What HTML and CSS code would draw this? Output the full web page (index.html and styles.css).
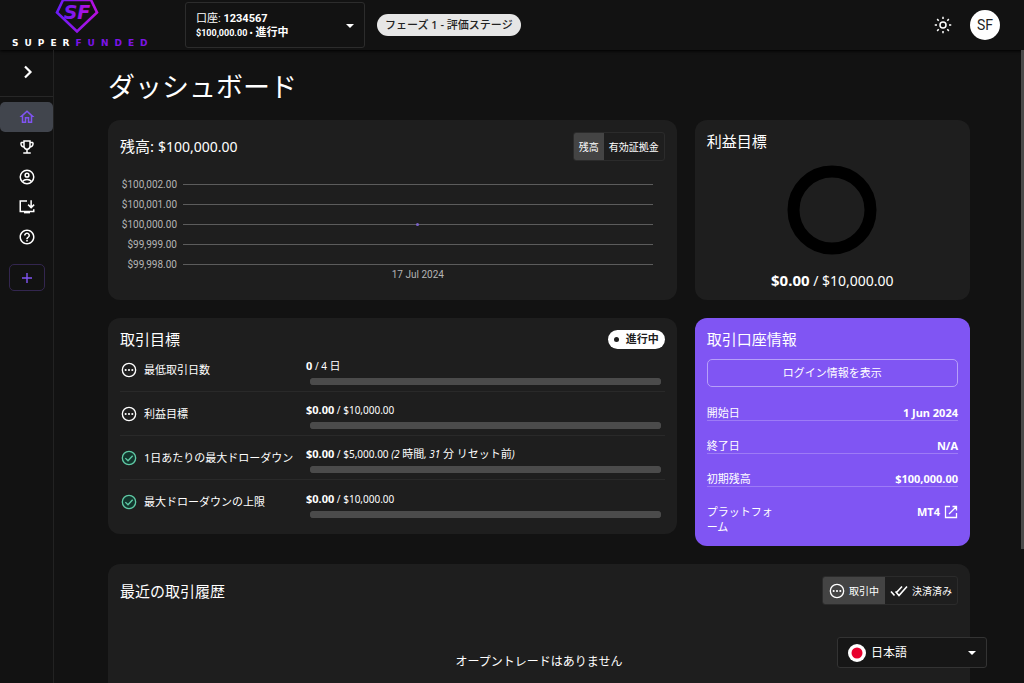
FILE: index.html
```html
<!DOCTYPE html>
<html lang="ja">
<head>
<meta charset="utf-8">
<meta name="viewport" content="width=device-width, initial-scale=1">
<title>ダッシュボード</title>
<link rel="stylesheet" href="styles.css">
</head>
<body>
<svg class="sprite" aria-hidden="true">
  <symbol id="pending" viewBox="0 0 24 24"><circle cx="12" cy="12" r="10" fill="none" stroke="currentColor" stroke-width="2"/><circle cx="7" cy="12" r="1.6" fill="currentColor"/><circle cx="12" cy="12" r="1.6" fill="currentColor"/><circle cx="17" cy="12" r="1.6" fill="currentColor"/></symbol>
  <symbol id="passed" viewBox="0 0 24 24"><circle cx="12" cy="12" r="10" fill="#12352c" stroke="currentColor" stroke-width="2"/><path d="M6.5 12.2l4 4 7-7.6" fill="none" stroke="currentColor" stroke-width="2"/></symbol>
</svg>
<header class="topbar">
  <a class="logo" href="#" aria-label="SuperFunded">
    <svg class="logo-mark" viewBox="0 0 44 34" width="44" height="34">
      <defs><linearGradient id="brand" x1="0" y1="0" x2="1" y2="0"><stop offset="0" stop-color="#6a1cf5"/><stop offset="1" stop-color="#b80fe0"/></linearGradient></defs>
      <path d="M8 0L2 12.5L22 31.5L42 12.5L36 0Z" fill="none" stroke="url(#brand)" stroke-width="2.6"/>
      <text class="logo-letters" x="22" y="19" text-anchor="middle" fill="url(#brand)">SF</text>
    </svg>
    <span class="wordmark">SUPER<span class="wordmark-accent">FUNDED</span></span>
  </a>
  <button class="account" type="button" aria-haspopup="listbox">
    <span class="account-text">
      <span>口座: <b>1234567</b></span>
      <b><span class="account-sum">$100,000.00 •</span> 進行中</b>
    </span>
    <svg class="caret" viewBox="0 0 8 4" width="8" height="4"><path d="M0 0h8L4 4z" fill="currentColor"/></svg>
  </button>
  <span class="phase">フェーズ 1 - 評価ステージ</span>
  <button class="theme" type="button" aria-label="テーマ">
    <svg viewBox="0 0 24 24" width="18" height="18" fill="none" stroke="currentColor" stroke-width="2"><circle cx="12" cy="12" r="4"/><path d="M12 1v3M12 20v3M1 12h3M20 12h3M4.2 4.2l2.1 2.1M17.7 17.7l2.1 2.1M4.2 19.8l2.1-2.1M17.7 6.3l2.1-2.1"/></svg>
  </button>
  <button class="avatar" type="button">SF</button>
</header>
<div class="shell">
  <nav class="sidebar">
    <button class="expand" type="button" aria-label="メニューを開く"><svg viewBox="0 0 16 16" width="16" height="16"><path d="M5 2.500l5.500 5.500L5 13.500" fill="none" stroke="currentColor" stroke-width="2.200"/></svg></button>
    <a class="nav-item nav-active" href="#" aria-label="ホーム"><svg viewBox="0 0 24 24" width="18" height="18"><path fill="currentColor" d="M12 5.690l5 4.500V18h-2v-6H9v6H7v-7.810l5-4.500M12 3 2 12h3v8h6v-6h2v6h6v-8h3L12 3z"/></svg></a>
    <a class="nav-item" href="#" aria-label="コンペティション"><svg viewBox="0 0 24 24" width="18" height="18"><path fill="currentColor" d="M19 5h-2V3H7v2H5c-1.100 0-2 .9-2 2v1c0 2.550 1.920 4.630 4.390 4.940.63 1.500 1.980 2.630 3.610 2.960V19H7v2h10v-2h-4v-3.100c1.630-.33 2.980-1.460 3.610-2.960C19.080 12.630 21 10.550 21 8V7c0-1.100-.9-2-2-2zM5 8V7h2v3.820C5.840 10.400 5 9.300 5 8zm7 6c-1.650 0-3-1.350-3-3V5h6v6c0 1.650-1.350 3-3 3zm7-6c0 1.300-.84 2.400-2 2.820V7h2v1z"/></svg></a>
    <a class="nav-item" href="#" aria-label="プロフィール"><svg viewBox="0 0 24 24" width="18" height="18" fill="none" stroke="currentColor" stroke-width="2"><circle cx="12" cy="12" r="9"/><circle cx="12" cy="9.500" r="2.500"/><path d="M6 18c1.500-1.800 3.600-2.700 6-2.700s4.500.9 6 2.700"/></svg></a>
    <a class="nav-item" href="#" aria-label="ダウンロード"><svg viewBox="0 0 24 24" width="18" height="18" fill="none" stroke="currentColor" stroke-width="2"><path d="M12 4H3v14h18v-3M17.500 3v9M13.500 8.800l4 4 4-4"/><path d="M8 18h8v2.500H8z" fill="currentColor" stroke="none"/></svg></a>
    <a class="nav-item" href="#" aria-label="ヘルプ"><svg viewBox="0 0 24 24" width="18" height="18"><path fill="currentColor" d="M11 18h2v-2h-2v2zm1-16C6.480 2 2 6.480 2 12s4.480 10 10 10 10-4.480 10-10S17.520 2 12 2zm0 18c-4.410 0-8-3.590-8-8s3.590-8 8-8 8 3.590 8 8-3.590 8-8 8zm0-14c-2.210 0-4 1.790-4 4h2c0-1.100.9-2 2-2s2 .9 2 2c0 2-3 1.750-3 5h2c0-2.250 3-2.500 3-5 0-2.210-1.790-4-4-4z"/></svg></a>
    <button class="add" type="button" aria-label="追加"><svg viewBox="0 0 12 12" width="12" height="12"><path d="M6 1v10M1 6h10" stroke="currentColor" stroke-width="1.400"/></svg></button>
  </nav>
  <main class="content">
    <h1>ダッシュボード</h1>
    <div class="cards">
      <section class="card card-wide">
        <div class="card-head card-head-tall">
          <h2>残高: <span class="sum">$100,000.00</span></h2>
          <div class="toggle">
            <button class="toggle-on" type="button" aria-pressed="true">残高</button>
            <button type="button" aria-pressed="false">有効証拠金</button>
          </div>
        </div>
        <div class="chart">
          <div class="tick"><span>$100,002.00</span><i></i></div>
          <div class="tick"><span>$100,001.00</span><i></i></div>
          <div class="tick"><span>$100,000.00</span><i class="point"></i></div>
          <div class="tick"><span>$99,999.00</span><i></i></div>
          <div class="tick"><span>$99,998.00</span><i></i></div>
          <div class="chart-date">17 Jul 2024</div>
        </div>
      </section>
      <section class="card profit">
        <h2>利益目標</h2>
        <svg class="donut" viewBox="0 0 90 90" width="90" height="90"><circle cx="45" cy="45" r="38.500" fill="none" stroke="#000" stroke-width="12"/></svg>
        <p class="profit-sum"><b>$0.00</b> / $10,000.00</p>
      </section>
      <section class="card card-wide goals">
        <div class="card-head">
          <h2>取引目標</h2>
          <span class="status">進行中</span>
        </div>
        <div class="goal">
          <svg class="goal-icon"><use href="#pending"/></svg><span class="goal-name" id="g1">最低取引日数</span>
          <div class="goal-value"><p><b>0</b> / 4 <span class="jp">日</span></p><progress aria-labelledby="g1" value="0" max="4"></progress></div>
        </div>
        <div class="goal">
          <svg class="goal-icon"><use href="#pending"/></svg><span class="goal-name" id="g2">利益目標</span>
          <div class="goal-value"><p><b>$0.00</b> / $10,000.00</p><progress aria-labelledby="g2" value="0" max="10000"></progress></div>
        </div>
        <div class="goal">
          <svg class="goal-icon goal-ok"><use href="#passed"/></svg><span class="goal-name" id="g3">1日あたりの最大ドローダウン</span>
          <div class="goal-value"><p><b>$0.00</b> / $5,000.00 <em>(2 <span class="jp">時間</span>, 31 <span class="jp">分 リセット前</span>)</em></p><progress aria-labelledby="g3" value="0" max="5000"></progress></div>
        </div>
        <div class="goal">
          <svg class="goal-icon goal-ok"><use href="#passed"/></svg><span class="goal-name" id="g4">最大ドローダウンの上限</span>
          <div class="goal-value"><p><b>$0.00</b> / $10,000.00</p><progress aria-labelledby="g4" value="0" max="10000"></progress></div>
        </div>
      </section>
      <section class="card info">
        <div class="card-head"><h2>取引口座情報</h2></div>
        <button class="login" type="button">ログイン情報を表示</button>
        <dl class="facts">
          <div><dt>開始日</dt><dd>1 Jun 2024</dd></div>
          <div><dt>終了日</dt><dd>N/A</dd></div>
          <div><dt>初期残高</dt><dd>$100,000.00</dd></div>
          <div><dt>プラットフォーム</dt><dd><a href="#">MT4 <svg viewBox="0 0 14 14" width="14" height="14" fill="none" stroke="currentColor" stroke-width="1.300"><path d="M6 1.500H1.500v11h11V8M8.500 1.500h4v4M12.500 1.500L5 9"/></svg></a></dd></div>
        </dl>
      </section>
      <section class="card card-full">
        <div class="card-head card-head-tall">
          <h2>最近の取引履歴</h2>
          <div class="toggle toggle-icons">
            <button class="toggle-on" type="button" aria-pressed="true"><svg width="16" height="16"><use href="#pending"/></svg>取引中</button>
            <button type="button" aria-pressed="false"><svg viewBox="0 0 18 16" width="18" height="16" fill="none" stroke="currentColor" stroke-width="1.600"><path d="M5.500 8.500l3.500 4 8-9M1 8.500l3.500 4M6.500 9.500l5.500-6"/></svg>決済済み</button>
          </div>
        </div>
        <p class="empty">オープントレードはありません</p>
      </section>
    </div>
  </main>
</div>
<div class="scroll-thumb"></div>
<label class="language">
  <svg viewBox="0 0 18 18" width="18" height="18" role="img" aria-label="言語"><circle cx="9" cy="9" r="9" fill="#fff"/><circle cx="9" cy="9" r="5.500" fill="#e8002d"/></svg>
  <select><option>日本語</option></select>
  <svg class="caret" viewBox="0 0 8 4" width="8" height="4"><path d="M0 0h8L4 4z" fill="currentColor"/></svg>
</label>
</body>
</html>
```
FILE: styles.css
```css
* { box-sizing: border-box; }

body {
  margin: 0;
  height: 100vh;
  display: flex;
  flex-direction: column;
  overflow: hidden;
  background: #121212;
  color: #fff;
  font: 11px/16px "Noto Sans", "Noto Sans CJK JP", sans-serif;
}

h1, h2, p, dl, dd { margin: 0; font-weight: 400; }
button, select { font: inherit; color: inherit; background: none; border: 0; padding: 0; margin: 0; }
a { color: inherit; text-decoration: none; }
svg { display: block; flex: none; }
.sprite { position: absolute; width: 0; height: 0; }

/* Top bar */
.topbar {
  flex: none;
  height: 50px;
  display: flex;
  align-items: center;
  padding: 0 24px 0 12px;
  box-shadow: 0 1px 3px #000;
}
.logo {
  width: 142px;
  height: 50px;
  margin-right: 31px;
  display: flex;
  flex-direction: column;
  align-items: center;
}
.logo-mark { margin-right: 12px; }
.logo-letters { font: italic bold 19px "DejaVu Sans", sans-serif; }
.wordmark {
  align-self: flex-start;
  margin-top: 4px;
  font: bold 9px/11px "DejaVu Sans", sans-serif;
  letter-spacing: 6px;
  white-space: nowrap;
}
.wordmark-accent { color: #7d14e8; }
.account {
  width: 180px;
  height: 46px;
  padding: 2px 10px 0;
  display: flex;
  align-items: center;
  justify-content: space-between;
  border: 1px solid #2c2c2c;
  border-radius: 3px;
  font: 11px/14px Roboto, "Noto Sans CJK JP", sans-serif;
  text-align: left;
}
.account-text { display: flex; flex-direction: column; }
.account-sum { font-size: 9px; }
.phase {
  height: 22px;
  margin: 0 auto 0 12px;
  padding: 0 8px;
  border-radius: 11px;
  background: #e6e6e6;
  color: #222;
  font-weight: 500;
  line-height: 22px;
}
.theme { margin-right: 18px; }
.avatar {
  width: 30px;
  height: 30px;
  border-radius: 50%;
  background: #fff;
  color: #222;
  font: 14px/30px Roboto, sans-serif;
}

/* Sidebar */
.shell { flex: 1; min-height: 0; display: flex; }
.sidebar {
  flex: none;
  width: 54px;
  display: flex;
  flex-direction: column;
  border-right: 1px solid #222;
}
.expand {
  height: 47px;
  margin-bottom: 5px;
  padding: 0 0 2px 3px;
  display: flex;
  align-items: center;
  justify-content: center;
  border-bottom: 1px solid #272727;
}
.nav-item {
  height: 30px;
  display: flex;
  align-items: center;
  justify-content: center;
  border-radius: 5px;
}
.nav-active { background: #41454d; color: #8054f2; }
.add {
  height: 27px;
  margin: 12px 8px 0 9px;
  display: flex;
  align-items: center;
  justify-content: center;
  border: 1px solid #33264f;
  border-radius: 5px;
  color: #8054f2;
}

/* Dashboard */
.content {
  flex: 1;
  min-width: 0;
  padding: 18px 54px 18px;
  overflow-y: auto;
  scrollbar-width: none;
}
h1 { margin-bottom: 15px; font-size: 27px; line-height: 37px; }
h2 { font-size: 15px; line-height: 18px; }
.cards {
  display: grid;
  grid-template-columns: repeat(3, minmax(0, 1fr));
  gap: 18px;
  align-items: start;
}
.card { padding: 12px; border-radius: 12px; background: #1e1e1e; }
.card-wide { grid-column: span 2; }
.card-full { grid-column: 1 / -1; min-height: 180px; }
.card-head { height: 18px; display: flex; align-items: center; justify-content: space-between; }
.card-head-tall { height: 29px; }
.sum { font-size: 14px; }

.toggle { display: flex; height: 29px; border: 1px solid #2b2b2b; border-radius: 3px; overflow: hidden; font-size: 10px; }
.toggle button { display: flex; align-items: center; gap: 4px; padding: 0 5px; }
.toggle .toggle-on { background: #444; }
.toggle-icons .toggle-on { padding: 0 6px; }

/* Balance chart */
.chart { padding: 13px 12px 5px 0; color: #b5b5b5; font: 10px/20px Roboto, sans-serif; }
.tick { height: 20px; display: flex; align-items: center; }
.tick span { width: 57px; padding-top: 2px; margin-right: 6px; text-align: right; }
.tick i { flex: 1; height: 1px; background: #5c5c5c; }
.point { display: flex; align-items: center; justify-content: center; }
.point::after { content: ""; flex: none; width: 3px; height: 3px; border-radius: 50%; background: #7a62c8; }
.chart-date { height: 15px; margin: -6px 0 0 63px; line-height: 14px; text-align: center; }

/* Profit target */
.profit { display: flex; flex-direction: column; align-self: stretch; padding-bottom: 10px; }
.donut { margin: 15px auto 16px; }
.profit-sum { font-size: 14px; line-height: 18px; text-align: center; }
.profit-sum b { font-size: 15px; }

/* Trading objectives */
.goals { padding-bottom: 10px; }
.status {
  height: 19px;
  padding: 0 6px;
  display: flex;
  align-items: center;
  gap: 7px;
  border-radius: 10px;
  background: #fff;
  color: #1e1e1e;
  font-weight: 700;
}
.status::before { content: ""; width: 5px; height: 5px; border-radius: 50%; background: #1e1e1e; }
.goal { height: 44px; display: flex; align-items: center; border-bottom: 1px solid #292929; }
.goal:last-child { border-bottom: 0; }
.goal-icon { width: 16px; height: 16px; margin: 0 7px 0 1px; }
.goal-ok { color: #5fc9a5; }
.goal-name { flex: 0 0 162px; }
.goal-value { flex: 1; min-width: 0; padding-top: 4px; }
.goal-value p { font-size: 10px; line-height: 16px; white-space: nowrap; }
.goal-value b, .jp { font-size: 11px; }
.jp { font-style: normal; }
progress {
  display: block;
  appearance: none;
  width: calc(100% - 8px);
  height: 7px;
  margin: 4px 4px 0;
  border: 0;
  border-radius: 4px;
  background: #4b4b4b;
}
progress::-webkit-progress-bar { border-radius: 4px; background: #4b4b4b; }
progress::-webkit-progress-value { border-radius: 4px; background: #8054f2; }

/* Account details */
.info { background: #8055f3; }
.login { width: 100%; height: 28px; margin: 11px 0 18px; border: 1px solid #b79ff9; border-radius: 5px; }
.facts { display: flex; flex-direction: column; gap: 17px; line-height: 15px; }
.facts div { display: flex; justify-content: space-between; border-bottom: 1px solid #9d7bf6; }
.facts div:last-child { border-bottom: 0; }
.facts dt { width: 27%; }
.facts dd { font-weight: 700; }
.facts a { display: flex; align-items: center; gap: 4px; }

.empty { margin-top: 48px; font-size: 12px; line-height: 18px; text-align: center; }

/* Overlays */
.scroll-thumb { position: fixed; top: 50px; right: 0; width: 3px; height: 73vh; background: #4a4a4a; }
.language {
  position: fixed;
  right: 37px;
  bottom: 15px;
  width: 150px;
  height: 31px;
  padding: 0 10px;
  display: flex;
  align-items: center;
  gap: 5px;
  border: 1px solid #333;
  border-radius: 3px;
  background: #161616;
}
.language select { flex: 1; appearance: none; font-size: 12px; }
```
